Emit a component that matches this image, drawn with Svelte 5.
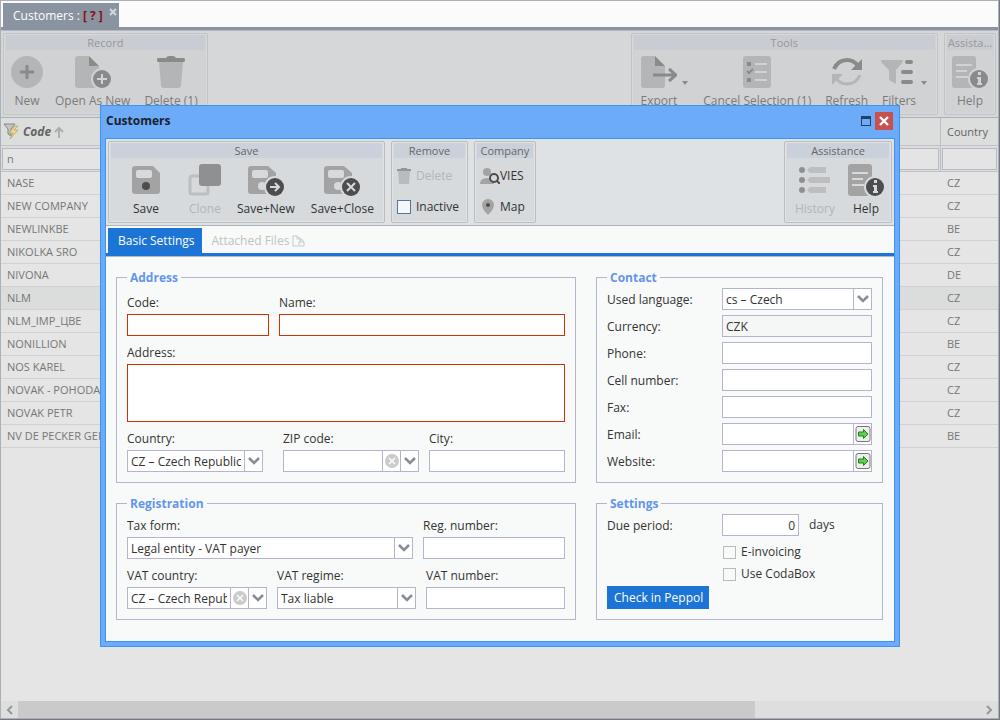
<script>
	const customers = [
		{ code: 'NASE', country: 'CZ' },
		{ code: 'NEW COMPANY', country: 'CZ' },
		{ code: 'NEWLINKBE', country: 'BE' },
		{ code: 'NIKOLKA SRO', country: 'CZ' },
		{ code: 'NIVONA', country: 'DE' },
		{ code: 'NLM', country: 'CZ' },
		{ code: 'NLM_IMP_ЦВЕ', country: 'CZ' },
		{ code: 'NONILLION', country: 'BE' },
		{ code: 'NOS KAREL', country: 'CZ' },
		{ code: 'NOVAK - POHODA', country: 'CZ' },
		{ code: 'NOVAK PETR', country: 'CZ' },
		{ code: 'NV DE PECKER GEN', country: 'BE' }
	];

	let selected = $state('NLM');
	let codeFilter = $state('n');
	let duePeriod = $state('0');

	const narrow = ['new', 'trash', 'list', 'refresh', 'save'];
</script>

{#snippet icon(name)}
	<svg
		class="icon"
		width={narrow.includes(name) ? 32 : 36}
		height="32"
		viewBox={narrow.includes(name) ? '2 0 32 32' : '0 0 36 32'}
		aria-hidden="true"
	>
		{#if name === 'new'}
			<circle class="soft" cx="18" cy="16" r="16" />
			<path class="line" d="M18 9v14M11 16h14" stroke-width="3" />
		{:else if name === 'copy'}
			<path class="soft" d="M3 0h11v10h10v22H3a3 3 0 0 1-3-3V3a3 3 0 0 1 3-3z" />
			<path class="strong" d="M14 0l10 10H14z" />
			<circle class="halo" cx="27" cy="23" r="11" />
			<circle class="strong" cx="27" cy="23" r="9" />
			<path class="mark" d="M27 18v10M22 23h10" stroke-width="2" />
		{:else if name === 'trash'}
			<path class="soft" d="M6 6h24l-2 23a3 3 0 0 1-3 3H11a3 3 0 0 1-3-3z" />
			<path class="strong" d="M5 2h8q1-2 3-2h4q2 0 3 2h8q1 0 1 2t-1 2H5q-1 0-1-2t1-2z" />
		{:else if name === 'export'}
			<path class="soft" d="M3 0h11v10h10v19a3 3 0 0 1-3 3H3a3 3 0 0 1-3-3V3a3 3 0 0 1 3-3z" />
			<path class="strong" d="M14 0l10 10H14z" />
			<path class="line" d="M12 19h22M28 13l7 6-7 6" stroke-width="3" />
		{:else if name === 'list'}
			<rect class="soft" x="4" width="28" height="32" rx="3" />
			<path class="strong" d="M8 6h4v4H8zM8 22h4v4H8z" />
			<path class="line" d="M8 15l2 2 4-4" stroke-width="2" />
			<path class="mark" d="M16 8h12M16 16h12M16 24h12" stroke-width="2" />
		{:else if name === 'refresh'}
			<path class="line" d="M5 13Q9 4 18 4q7 0 11 6" stroke-width="4" />
			<path class="strong" d="M33 3v11H22z" />
			<path class="softline" d="M31 19q-4 9-13 9-7 0-11-6" stroke-width="3" />
			<path class="soft" d="M3 29V18h11z" />
		{:else if name === 'filter'}
			<path class="soft" d="M1 4h20q2 1 0 3l-6 7v14l-7-4V14L1 7q-2-2 0-3z" />
			<path class="line" d="M26 6h4M22 16h8M22 26h8" stroke-width="4" stroke-linecap="round" />
		{:else if name === 'help'}
			<rect class="soft" width="24" height="32" rx="3" />
			<path class="mark" d="M4 9h16M4 15h11M4 21h12" stroke-width="2" />
			<circle class="halo" cx="27" cy="23" r="11" />
			<circle class="strong" cx="27" cy="23" r="9" />
			<path class="knock" d="M26 16h3v3h-3zM25 21h4v6h1v2h-5v-2h1v-4h-1z" />
		{:else if name === 'history'}
			<circle class="strong" cx="5" cy="6" r="3" />
			<circle class="strong" cx="5" cy="16" r="3" />
			<circle class="strong" cx="5" cy="26" r="3" />
			<path class="soft" d="M10 6l3-3h16v6H13zM10 16l3-3h20v6H13zM10 26l3-3h16v6H13z" />
		{:else if name === 'clone'}
			<rect class="softline" x="3" y="12" width="18" height="18" rx="2" stroke-width="3" />
			<rect class="strong" x="12" width="22" height="22" rx="3" />
		{:else if name === 'save'}
			<path class="soft" d="M7 2h18l7 7v18a3 3 0 0 1-3 3H7a3 3 0 0 1-3-3V5a3 3 0 0 1 3-3z" />
			<rect class="knock" x="8" y="6" width="16" height="8" rx="2" />
			<circle class="strong" cx="18" cy="22" r="4" />
		{:else}
			<path class="soft" d="M3 2h17l8 7v18a3 3 0 0 1-3 3H3a3 3 0 0 1-3-3V5a3 3 0 0 1 3-3z" />
			<rect class="knock" x="4" y="6" width="16" height="8" rx="2" />
			<circle class="knock" cx="14" cy="22" r="4" />
			<circle class="halo" cx="27" cy="23" r="11" />
			<circle class="strong" cx="27" cy="23" r="9" />
			{#if name === 'save-new'}
				<path class="mark" d="M22 23h9M27 19l4 4-4 4" stroke-width="2" />
			{:else}
				<path class="mark" d="M23 19l8 8M31 19l-8 8" stroke-width="2" />
			{/if}
		{/if}
	</svg>
{/snippet}

{#snippet tool(name, label, menu = false, disabled = false)}
	<button class="tool" class:menu {disabled}>
		{@render icon(name)}
		<span>{label}</span>
		{#if menu}<i class="caret"></i>{/if}
	</button>
{/snippet}

{#snippet arrow()}
	<span class="trigger">
		<svg width="12" height="8" viewBox="0 0 12 8" aria-hidden="true">
			<path d="M1 1l5 5 5-5" fill="none" stroke="#868f99" stroke-width="2.6" />
		</svg>
	</span>
{/snippet}

{#snippet clear()}
	<button type="button" class="trigger" aria-label="Clear">
		<svg width="14" height="14" viewBox="0 0 14 14" aria-hidden="true">
			<circle cx="7" cy="7" r="7" fill="#cbcbcb" />
			<path d="M4 4l6 6M10 4l-6 6" stroke="#fff" stroke-width="1.4" />
		</svg>
	</button>
{/snippet}

{#snippet go(label)}
	<button type="button" class="trigger" aria-label={label}>
		<svg width="16" height="16" viewBox="0 0 16 16" aria-hidden="true">
			<rect x="1" y="0.5" width="14" height="15" rx="2" fill="#eee" stroke="#777" />
			<path d="M3.5 6h5V3.5L13 8l-4.500 4.500V10h-5z" fill="#68c95a" stroke="#16870d" />
		</svg>
	</button>
{/snippet}

<main class="app">
	<div class="tabstrip">
		<div class="tab">
			Customers : <b>[ ? ]</b>
			<button class="tab-close" aria-label="Close tab">
				<svg width="8" height="8" viewBox="0 0 8 8"><path d="M1 1l6 6M7 1L1 7" stroke="#d3d7dc" stroke-width="2" /></svg>
			</button>
		</div>
	</div>

	<div class="toolbar dimmed">
		<section class="group">
			<h2>Record</h2>
			<div class="tools">
				{@render tool('new', 'New')}
				{@render tool('copy', 'Open As New')}
				{@render tool('trash', 'Delete (1)')}
			</div>
		</section>
		<section class="group right">
			<h2>Tools</h2>
			<div class="tools">
				{@render tool('export', 'Export', true)}
				{@render tool('list', 'Cancel Selection (1)')}
				{@render tool('refresh', 'Refresh')}
				{@render tool('filter', 'Filters', true)}
			</div>
		</section>
		<section class="group assist">
			<h2 title="Assistance">Assista...</h2>
			<div class="tools">
				{@render tool('help', 'Help')}
			</div>
		</section>
	</div>

	<div class="grid">
		<table>
			<colgroup>
				<col class="col-code" />
				<col />
				<col class="col-country" />
			</colgroup>
			<thead>
				<tr class="head">
					<th class="sorted">
						<div>
							<svg width="17" height="18" viewBox="0 0 17 18" aria-hidden="true">
								<path d="M1 1h11L8 6v7l-3-2V6z" fill="#c3c5c6" stroke="#84888a" />
								<path d="M12 3L6 10h4l-3 6 8-9h-4l4-4z" fill="#efd78b" stroke="#b79d5c" stroke-width=".7" />
							</svg>
							Code
							<svg width="10" height="12" viewBox="0 0 10 12" aria-hidden="true">
								<path d="M5 12V2M1 6l4-4 4 4" fill="none" stroke="#adadad" stroke-width="2" />
							</svg>
						</div>
					</th>
					<th></th>
					<th>Country</th>
				</tr>
				<tr class="filters">
					<td><input aria-label="Filter by code" bind:value={codeFilter} /></td>
					<td><input aria-label="Filter by name" /></td>
					<td><input aria-label="Filter by country" /></td>
				</tr>
			</thead>
			<tbody>
				{#each customers as row}
					<tr class:selected={row.code === selected} onclick={() => (selected = row.code)}>
						<td>{row.code}</td>
						<td></td>
						<td>{row.country}</td>
					</tr>
				{/each}
			</tbody>
		</table>
	</div>

	<div class="scrollbar">
		<button aria-label="Scroll left">
			<svg width="7" height="10" viewBox="0 0 7 10"><path d="M6 1L2 5l4 4" fill="none" stroke="#969696" stroke-width="2" /></svg>
		</button>
		<div class="track"><div class="thumb"></div></div>
		<button aria-label="Scroll right">
			<svg width="7" height="10" viewBox="0 0 7 10"><path d="M1 1l4 4-4 4" fill="none" stroke="#969696" stroke-width="2" /></svg>
		</button>
	</div>
</main>

<div class="dialog" role="dialog" aria-labelledby="dialog-title">
	<header>
		<h1 id="dialog-title">Customers</h1>
		<button class="maximize" aria-label="Maximize"></button>
		<button class="close" aria-label="Close">
			<svg width="10" height="10" viewBox="0 0 10 10"><path d="M1 1l8 8M9 1L1 9" stroke="#fff" stroke-width="2.4" /></svg>
		</button>
	</header>

	<div class="body">
		<div class="toolbar">
			<section class="group">
				<h2>Save</h2>
				<div class="tools save-tools">
					{@render tool('save', 'Save')}
					{@render tool('clone', 'Clone', false, true)}
					{@render tool('save-new', 'Save+New')}
					{@render tool('save-close', 'Save+Close')}
				</div>
			</section>
			<section class="group remove">
				<h2>Remove</h2>
				<div class="stack">
					<button class="small" disabled>
						<svg width="14" height="16" viewBox="0 0 14 16" aria-hidden="true">
							<path d="M1 3h12l-1 13H2z" fill="#b9bbbc" />
							<path d="M0 1h4V0h6v1h4v2H0z" fill="#949698" />
						</svg>
						Delete
					</button>
					<label class="small"><input type="checkbox" />Inactive</label>
				</div>
			</section>
			<section class="group company">
				<h2>Company</h2>
				<div class="stack">
					<button class="small">
						<svg width="20" height="16" viewBox="0 0 20 16" aria-hidden="true">
							<circle cx="7" cy="4" r="4" fill="#a3a3a3" />
							<path d="M0 16q0-6 7-6 7 0 7 6z" fill="#a3a3a3" />
							<circle cx="14" cy="10" r="4" fill="#d6dadd" stroke="#4d4d4d" stroke-width="2" />
							<path d="M17 13l3 3" stroke="#4d4d4d" stroke-width="2" />
						</svg>
						VIES
					</button>
					<button class="small">
						<svg width="20" height="16" viewBox="0 0 20 16" aria-hidden="true">
							<path d="M8 0a6 6 0 0 1 6 6q0 4-6 10-6-6-6-10a6 6 0 0 1 6-6z" fill="#a3a3a3" />
							<circle cx="8" cy="6" r="2" fill="#4d4d4d" />
						</svg>
						Map
					</button>
				</div>
			</section>
			<section class="group right">
				<h2>Assistance</h2>
				<div class="tools">
					{@render tool('history', 'History', false, true)}
					{@render tool('help', 'Help')}
				</div>
			</section>
		</div>

		<nav class="tabs">
			<button class="active">Basic Settings</button>
			<button disabled>
				Attached Files
				<svg width="13" height="12" viewBox="0 0 13 12" fill="none" stroke="#c6c8c9" aria-hidden="true">
					<path d="M6 11H1V1h4l4 3v1M5 1v3h4M7 7h5v4H7zM8 7V5h3v2" />
				</svg>
			</button>
		</nav>

		<form class="panel">
			<fieldset class="address">
				<legend>Address</legend>
				<div class="row code-name">
					<label>Code:<input class="required" /></label>
					<label>Name:<input class="required" /></label>
				</div>
				<label>Address:<textarea class="required"></textarea></label>
				<div class="row location">
					<div class="field">
						<label for="country">Country:</label>
						<div class="combo">
							<select id="country"><option>CZ – Czech Republic</option></select>
							{@render arrow()}
						</div>
					</div>
					<div class="field">
						<label for="zip">ZIP code:</label>
						<div class="combo">
							<input id="zip" />
							{@render clear()}
							{@render arrow()}
						</div>
					</div>
					<label>City:<input /></label>
				</div>
			</fieldset>

			<fieldset class="contact">
				<legend>Contact</legend>
				<div class="line">
					<label for="language">Used language:</label>
					<div class="combo">
						<select id="language"><option>cs – Czech</option></select>
						{@render arrow()}
					</div>
				</div>
				<div class="line">
					<label for="currency">Currency:</label>
					<input id="currency" value="CZK" readonly />
				</div>
				<div class="line">
					<label for="phone">Phone:</label>
					<input id="phone" type="tel" />
				</div>
				<div class="line">
					<label for="cell">Cell number:</label>
					<input id="cell" type="tel" />
				</div>
				<div class="line">
					<label for="fax">Fax:</label>
					<input id="fax" type="tel" />
				</div>
				<div class="line">
					<label for="email">Email:</label>
					<div class="combo">
						<input id="email" type="email" />
						{@render go('Write email')}
					</div>
				</div>
				<div class="line">
					<label for="website">Website:</label>
					<div class="combo">
						<input id="website" type="url" />
						{@render go('Open website')}
					</div>
				</div>
			</fieldset>

			<fieldset class="registration">
				<legend>Registration</legend>
				<div class="row tax">
					<div class="field">
						<label for="tax-form">Tax form:</label>
						<div class="combo">
							<select id="tax-form"><option>Legal entity - VAT payer</option></select>
							{@render arrow()}
						</div>
					</div>
					<label>Reg. number:<input /></label>
				</div>
				<div class="row vat">
					<div class="field">
						<label for="vat-country">VAT country:</label>
						<div class="combo">
							<select id="vat-country"><option>CZ – Czech Republic</option></select>
							{@render clear()}
							{@render arrow()}
						</div>
					</div>
					<div class="field">
						<label for="vat-regime">VAT regime:</label>
						<div class="combo">
							<select id="vat-regime"><option>Tax liable</option></select>
							{@render arrow()}
						</div>
					</div>
					<label>VAT number:<input /></label>
				</div>
			</fieldset>

			<fieldset class="settings">
				<legend>Settings</legend>
				<div class="line">
					<label for="due">Due period:</label>
					<div class="due">
						<input id="due" bind:value={duePeriod} />
						<span>days</span>
					</div>
				</div>
				<label class="check"><input type="checkbox" />E-invoicing</label>
				<label class="check"><input type="checkbox" />Use CodaBox</label>
				<button type="button" class="primary">Check in Peppol</button>
			</fieldset>
		</form>
	</div>
</div>

<style>
	:global(body) {
		margin: 0;
		background: #74787c;
		font: 12px/16px "Open Sans", "Noto Sans", sans-serif;
		color: #333;
	}
	* {
		box-sizing: border-box;
	}
	button, input, select, textarea {
		margin: 0;
		padding: 0;
		border: 0;
		border-radius: 0;
		background: none;
		font: inherit;
		color: inherit;
		appearance: none;
		outline: none;
	}
	h1, h2 {
		margin: 0;
		font-size: 12px;
	}
	svg {
		display: block;
		flex: none;
	}
	.app {
		display: flex;
		flex-direction: column;
		min-height: calc(100vh - 1px);
		margin-right: 1px;
		border: 1px solid #a9b0ba;
		background: #e5e5e5;
		overflow: hidden;
	}
	.tabstrip {
		display: flex;
		height: 29px;
		padding: 2px 2px 0;
		background: #fafbfa;
		border-bottom: 3px solid #8a94a0;
	}
	.tab {
		display: flex;
		gap: 3px;
		padding: 5px 2px 0 10px;
		background: #8a94a0;
		color: #fff;
	}
	.tab b {
		color: #8b0d12;
	}
	.tab-close {
		align-self: flex-start;
		margin-left: 3px;
	}

	.toolbar {
		--soft: #a3a3a3;
		--strong: #4d4d4d;
		--face: #d6dadd;
		display: flex;
		align-items: flex-start;
		gap: 6px;
		height: 87px;
		padding: 2px;
		background: #dee2e5;
		border-bottom: 1px solid #a9b1b9;
	}
	.dimmed {
		--soft: #b4b5b6;
		--strong: #8a8a8a;
		--face: #d1d2d3;
		height: 88px;
		border-top: 1px solid #b4b8be;
		background: #d6d7d8;
		color: #7b7b7b;
	}
	.group {
		height: 82px;
		padding: 1px;
		border: 1px solid #bcbdbe;
		border-radius: 2px;
		background: var(--face);
		box-shadow: inset 0 0 0 1px #e1e3e4;
	}
	.group h2 {
		height: 15px;
		line-height: 16px;
		margin: 0 1px;
		background: #cbd1da;
		color: #666;
		font-size: 11px;
		font-weight: 400;
		text-align: center;
		white-space: nowrap;
	}
	.dimmed .group {
		border-color: #c2c3c4;
		box-shadow: inset 0 0 0 1px #d8d9da;
	}
	.dimmed h2 {
		background: #c9ccd2;
		color: #979797;
	}
	.right {
		margin-left: auto;
	}
	.dimmed .assist {
		width: 52px;
	}
	.tools {
		display: flex;
		padding: 6px 1px 0;
	}
	.tool {
		position: relative;
		display: flex;
		flex-direction: column;
		align-items: center;
		gap: 5px;
		padding: 0 5px;
		white-space: nowrap;
	}
	.tool span {
		padding: 0 3px;
	}
	.dimmed .tool span {
		padding: 0 2px;
	}
	.tool.menu {
		padding-right: 17px;
	}
	.caret {
		position: absolute;
		right: 8px;
		top: 25px;
		border: 3px solid transparent;
		border-top: 4px solid var(--strong);
		border-bottom: 0;
	}
	.tool:disabled {
		--soft: #bcbebf;
		--strong: #8f9091;
		color: #b3b5b7;
	}
	.save-tools .tool:first-child {
		width: 70px;
	}
	.icon .soft {
		fill: var(--soft);
	}
	.icon .strong {
		fill: var(--strong);
	}
	.icon .line {
		fill: none;
		stroke: var(--strong);
	}
	.icon .softline {
		fill: none;
		stroke: var(--soft);
	}
	.icon .mark {
		fill: none;
		stroke: var(--face);
	}
	.icon .halo,
	.icon .knock {
		fill: var(--face);
	}
	.stack {
		display: flex;
		flex-direction: column;
		gap: 15px;
		padding: 10px 4px 0;
	}
	.small {
		display: flex;
		align-items: center;
		gap: 5px;
		height: 16px;
	}
	.small:disabled {
		color: #b3b5b7;
	}
	.small input {
		width: 14px;
		height: 14px;
		border: 1px solid #55779d;
		background: #f6f7f8;
	}
	.remove {
		width: 77px;
	}
	.company {
		width: 62px;
	}
	.company .small {
		gap: 0;
	}

	.grid {
		flex: 1;
	}
	table {
		width: 100%;
		table-layout: fixed;
		border-collapse: separate;
		border-spacing: 0;
		font-size: 11px;
		color: #777;
	}
	.col-code {
		width: 200px;
	}
	.col-country {
		width: 58px;
	}
	th, td {
		height: 23px;
		padding: 0 6px;
		border-bottom: 1px solid #d0d1d3;
		text-align: left;
		white-space: nowrap;
	}
	tbody td + td {
		padding-left: 7px;
	}
	.head th {
		height: 28px;
		background: #dcdddd;
		border-bottom: 1px solid #bfc2c9;
		font-weight: 400;
		color: #646464;
	}
	.head th + th,
	.filters td + td {
		border-left: 1px solid #b9bdc6;
	}
	.head .sorted {
		padding-left: 2px;
		font: italic bold 12px/16px "Open Sans", "Noto Sans", sans-serif;
	}
	.sorted div {
		display: flex;
		align-items: center;
		gap: 3px;
	}
	.filters td {
		height: 26px;
		padding: 1px;
		border-bottom: 1px solid #bfc2c9;
		background: #dcdddd;
	}
	.filters input {
		display: block;
		width: 100%;
		height: 22px;
		padding: 0 4px;
		border: 1px solid #b5bac5;
		background: #e4e4e4;
	}
	.selected td {
		background: #dbdddd;
	}
	.scrollbar {
		display: flex;
		height: 17px;
		background: #dedede;
	}
	.scrollbar button {
		display: flex;
		align-items: center;
		justify-content: center;
		width: 17px;
	}
	.track {
		flex: 1;
	}
	.thumb {
		width: 76.5%;
		height: 17px;
		background: #cacaca;
	}

	.dialog {
		position: absolute;
		top: 105px;
		left: 100px;
		right: 100px;
		padding: 0 4px 4px;
		border: 1px solid #3c93f5;
		background: #6babf7;
	}
	.dialog header {
		display: flex;
		align-items: center;
		gap: 4px;
		height: 32px;
		padding: 0 2px 3px 1px;
	}
	.dialog h1 {
		flex: 1;
		color: #1a222c;
	}
	.maximize {
		width: 10px;
		height: 10px;
		border: 1px solid #23405f;
		border-top-width: 3px;
	}
	.close {
		display: flex;
		align-items: center;
		justify-content: center;
		width: 18px;
		height: 18px;
		background: #c8504f;
	}
	.body {
		border: 1px solid #3c93f5;
		background: #f8faf9;
	}
	.tabs {
		display: flex;
		height: 30px;
		padding: 2px 2px 0;
		border-bottom: 3px solid #1c74d6;
	}
	.tabs button {
		display: flex;
		align-items: center;
		gap: 3px;
		padding: 0 7px 0 10px;
		color: #c0c2c3;
	}
	.tabs .active {
		background: #1c74d6;
		color: #fff;
	}

	.panel {
		display: grid;
		grid-template-columns: 460fr 287fr;
		gap: 12px 20px;
		padding: 12px 11px 21px 10px;
		border-top: 1px solid #b5b9c2;
	}
	fieldset {
		display: flex;
		flex-direction: column;
		min-width: 0;
		margin: 0;
		padding: 3px 10px 10px;
		border: 1px solid #b4b5cd;
	}
	legend {
		height: 16px;
		line-height: 18px;
		padding: 0 3px;
		color: #6495ed;
		font-weight: 700;
	}
	.address {
		gap: 6px;
		padding-top: 7px;
	}
	.registration {
		gap: 6px;
		padding-top: 4px;
	}
	.contact {
		gap: 5px;
	}
	.row {
		display: grid;
		gap: 10px;
	}
	.code-name {
		grid-template-columns: 142fr 286fr;
	}
	.location {
		grid-template-columns: 146fr 136fr 136fr;
	}
	.location .field:first-child {
		margin-right: 10px;
	}
	.tax {
		grid-template-columns: 286fr 142fr;
	}
	.vat {
		grid-template-columns: 140fr 139fr 139fr;
	}
	.panel label,
	.field {
		display: block;
		min-width: 0;
		line-height: 22px;
	}
	.panel input,
	.panel textarea,
	.combo {
		display: block;
		width: 100%;
		height: 22px;
		border: 1px solid #b4b5cd;
		background: #fff;
		padding: 0 3px;
		line-height: 20px;
	}
	.panel textarea {
		height: 58px;
		resize: none;
	}
	.panel .required {
		border-color: #cc3300;
	}
	.panel input:read-only {
		background: #f5f7f6;
	}
	.panel .combo {
		display: flex;
		padding: 0;
	}
	.panel .combo input,
	.combo select {
		flex: 1;
		min-width: 0;
		height: 20px;
		padding: 1px 3px 0;
		border: 0;
		text-overflow: clip;
	}
	.trigger {
		display: flex;
		flex: none;
		align-items: center;
		justify-content: center;
		width: 18px;
		height: 20px;
		border-left: 1px solid #b4b5cd;
	}
	.line {
		display: grid;
		grid-template-columns: 115fr 150fr;
	}
	.panel .line label {
		line-height: 24px;
		height: 22px;
	}
	.due {
		display: flex;
		align-items: center;
		gap: 10px;
	}
	.panel .due input {
		width: 77px;
		text-align: right;
	}
	.panel .check {
		display: flex;
		align-items: center;
		gap: 5px;
		margin-left: 116px;
	}
	.line + .check {
		margin-top: 5px;
	}
	.panel .check input {
		width: 13px;
		height: 13px;
		padding: 0;
		border-color: #bbb;
		background: #f8faf9;
	}
	.primary {
		align-self: flex-start;
		height: 23px;
		margin-top: 1px;
		padding: 1px 6px 0 7px;
		background: #1c74d6;
		color: #fff;
	}
</style>
